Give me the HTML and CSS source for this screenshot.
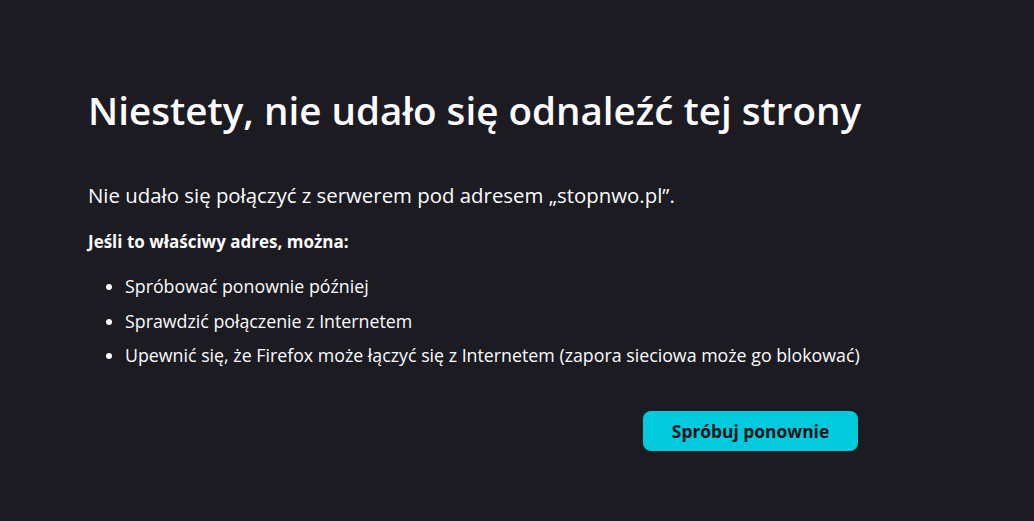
FILE: index.html
```html
<!DOCTYPE html>
<html lang="pl">
<head>
<meta charset="utf-8">
<title>Nie można znaleźć serwera</title>
<link rel="stylesheet" href="styles.css">
</head>
<body>
<main class="container">
  <h1 class="title">Niestety, nie udało się odnaleźć tej strony</h1>
  <p class="desc">Nie udało się połączyć z serwerem pod adresem „stopnwo.pl”.</p>
  <p class="hint">Jeśli to właściwy adres, można:</p>
  <ul class="list">
    <li>Spróbować ponownie później</li>
    <li>Sprawdzić połączenie z Internetem</li>
    <li>Upewnić się, że Firefox może łączyć się z Internetem (zapora sieciowa może go blokować)</li>
  </ul>
  <div class="actions">
    <button class="retry">Spróbuj ponownie</button>
  </div>
</main>
</body>
</html>
```
FILE: styles.css
```css
html, body {
  margin: 0;
  padding: 0;
  height: 100%;
}
body {
  background: #1c1b22;
  color: #fbfbfe;
  font-family: "Open Sans", "Noto Sans", sans-serif;
}
.container {
  width: 800px;
  padding: 84px 0 0 88px;
}
.title {
  margin: 0;
  font-size: 38.6px;
  font-weight: 600;
  line-height: 52px;
}
.desc {
  margin: 45px 0 0;
  font-size: 20.4px;
  line-height: 28px;
}
.hint {
  margin: 21px 0 0;
  font-size: 17px;
  font-weight: 700;
  line-height: 24px;
}
.list {
  margin: 20px 0 0;
  padding-left: 37px;
  font-size: 17.8px;
  line-height: 24px;
}
.list li + li {
  margin-top: 10.5px;
}
.actions {
  display: flex;
  justify-content: flex-end;
  margin-top: 44px;
  padding-right: 30px;
}
.retry {
  width: 215px;
  height: 40px;
  border: none;
  border-radius: 8px;
  background: #00cadb;
  color: #15141a;
  font-family: inherit;
  font-size: 17.4px;
  font-weight: 700;
}
```
